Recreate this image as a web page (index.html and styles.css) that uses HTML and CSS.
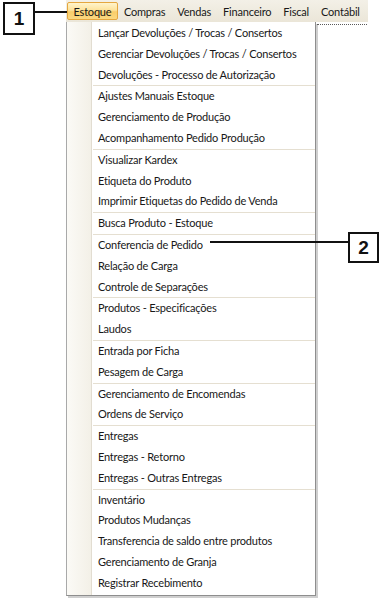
FILE: index.html
```html
<!DOCTYPE html>
<html lang="pt">
<head>
<meta charset="utf-8">
<link rel="stylesheet" href="styles.css">
</head>
<body>
<div class="stage">
  <div class="app">
    <div class="menubar">
      <span class="mb-item active">Estoque</span>
      <span class="mb-item">Compras</span>
      <span class="mb-item">Vendas</span>
      <span class="mb-item">Financeiro</span>
      <span class="mb-item">Fiscal</span>
      <span class="mb-item">Contábil</span>
    </div>
    <div class="below">
      <div class="dropdown">
        <div class="mi">Lançar Devoluções / Trocas / Consertos</div>
        <div class="mi">Gerenciar Devoluções / Trocas / Consertos</div>
        <div class="mi">Devoluções - Processo de Autorização</div>
        <div class="sep"></div>
        <div class="mi">Ajustes Manuais Estoque</div>
        <div class="mi">Gerenciamento de Produção</div>
        <div class="mi">Acompanhamento Pedido Produção</div>
        <div class="sep"></div>
        <div class="mi">Visualizar Kardex</div>
        <div class="mi">Etiqueta do Produto</div>
        <div class="mi">Imprimir Etiquetas do Pedido de Venda</div>
        <div class="sep"></div>
        <div class="mi">Busca Produto - Estoque</div>
        <div class="sep"></div>
        <div class="mi">Conferencia de Pedido</div>
        <div class="mi">Relação de Carga</div>
        <div class="mi">Controle de Separações</div>
        <div class="sep"></div>
        <div class="mi">Produtos - Especificações</div>
        <div class="mi">Laudos</div>
        <div class="sep"></div>
        <div class="mi">Entrada por Ficha</div>
        <div class="mi">Pesagem de Carga</div>
        <div class="sep"></div>
        <div class="mi">Gerenciamento de Encomendas</div>
        <div class="mi">Ordens de Serviço</div>
        <div class="sep"></div>
        <div class="mi">Entregas</div>
        <div class="mi">Entregas - Retorno</div>
        <div class="mi">Entregas - Outras Entregas</div>
        <div class="sep"></div>
        <div class="mi">Inventário</div>
        <div class="mi">Produtos Mudanças</div>
        <div class="mi">Transferencia de saldo entre produtos</div>
        <div class="mi">Gerenciamento de Granja</div>
        <div class="mi">Registrar Recebimento</div>
      </div>
      <div class="window-edge"></div>
    </div>
  </div>

  <div class="callout callout-1">1</div>
  <div class="leader leader-1"></div>
  <div class="callout callout-2">2</div>
  <div class="leader leader-2"></div>
</div>
</body>
</html>
```

FILE: styles.css
```css
html, body {
  margin: 0;
  padding: 0;
  background: #ffffff;
}

.stage {
  position: relative;
  width: 383px;
  height: 599px;
  overflow: hidden;
  font-family: Lato, "Noto Sans", sans-serif;
  color: #181818;
}

.app {
  padding-left: 66px;
}

.menubar {
  width: 302px;
  height: 22px;
  display: flex;
  align-items: center;
  gap: 0;
  padding-left: 1px;
  box-sizing: border-box;
  background: linear-gradient(#f3f0e7, #ebe6d8);
  font-size: 11px;
  letter-spacing: -0.2px;
}

.mb-item {
  height: 18px;
  line-height: 17px;
  padding: 0 5px;
  box-sizing: border-box;
  border: 1px solid transparent;
  border-radius: 2px;
  white-space: nowrap;
}

.mb-item.active {
  padding: 0 5.5px;
  border-color: #e5a73f;
  background: linear-gradient(#fff4cc, #fde29a 45%, #f9cd6a 55%, #fbd880);
}

.below {
  display: flex;
  align-items: flex-start;
}

.dropdown {
  width: 250px;
  box-sizing: border-box;
  border: 1px solid #a9a9a9;
  border-top: none;
  border-right-color: #8e8e8e;
  border-bottom-color: #8e8e8e;
  box-shadow: 2px 2px 0 #cfcfcf;
  padding: 1px 0 1px 0;
  font-size: 11px;
  letter-spacing: -0.2px;
  background:
    linear-gradient(90deg, #fbfaf6 0, #f3f0e7 24px, #e2ddd1 24px, #e2ddd1 25px, #ffffff 25px, #ffffff 26px, transparent 26px) left top / 26px 100% no-repeat,
    #ffffff;
}

.mi {
  height: 20.8px;
  line-height: 20.8px;
  padding-left: 31px;
  white-space: nowrap;
}

.sep {
  height: 1px;
  margin-left: 26px;
  background: #e5dfd1;
}

.window-edge {
  width: 50px;
  margin-top: 2px;
  margin-left: 1px;
  border-top: 1px dotted #5a5a5a;
}

.callout {
  position: absolute;
  box-sizing: border-box;
  border: 2px solid #111111;
  background: #ffffff;
  display: flex;
  align-items: center;
  justify-content: center;
  font-family: "Liberation Sans", Arial, sans-serif;
  font-weight: bold;
  font-size: 19px;
  color: #111111;
}

.callout-1 {
  left: 3px;
  top: 2px;
  width: 32px;
  height: 33px;
}

.callout-2 {
  left: 348px;
  top: 232px;
  width: 31px;
  height: 31px;
}

.leader {
  position: absolute;
  height: 2px;
  background: #111111;
}

.leader-1 {
  left: 35px;
  top: 11px;
  width: 32px;
}

.leader-2 {
  left: 210px;
  top: 241px;
  width: 138px;
}
```
